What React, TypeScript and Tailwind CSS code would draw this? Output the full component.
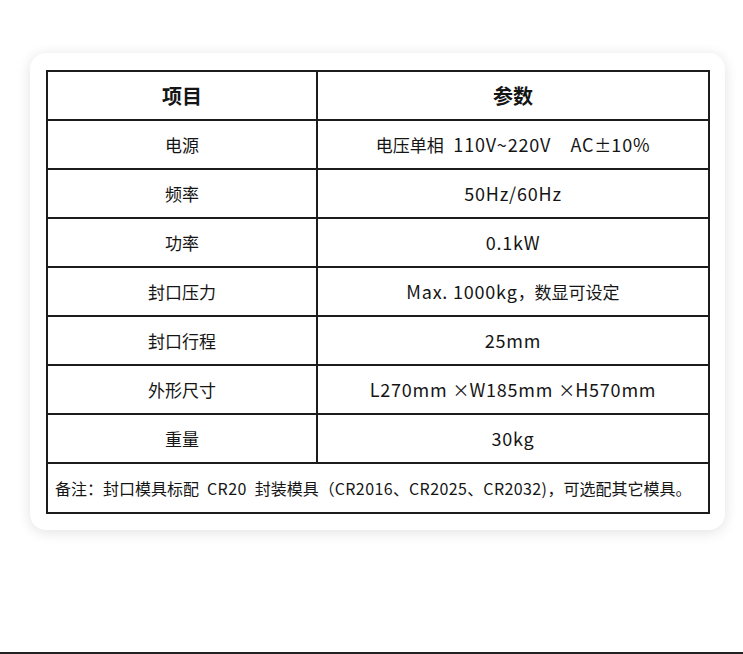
import React from "react";

const rows: [string, string][] = [
  ["电源", "电压单相  110V~220V    AC±10%"],
  ["频率", "50Hz/60Hz"],
  ["功率", "0.1kW"],
  ["封口压力", "Max. 1000kg，数显可设定"],
  ["封口行程", "25mm"],
  ["外形尺寸", "L270mm ×W185mm ×H570mm"],
  ["重量", "30kg"],
];

function Wide({ text, cls }: { text: string; cls: string }) {
  const parts = text.match(/[\x20-\x7e]+|[^\x20-\x7e]+/g) || [];
  return (
    <>
      {parts.map((p, i) =>
        /^[\x20-\x7e]+$/.test(p) ? (
          <span key={i} className={cls}>
            {p}
          </span>
        ) : (
          <span key={i}>{p}</span>
        )
      )}
    </>
  );
}

export default function App() {
  return (
    <div
      className="w-[743px] h-[654px] bg-white flex flex-col text-[#151515]"
      style={{ fontFamily: '"Noto Sans CJK SC", "Noto Sans", sans-serif' }}
    >
      <div className="flex-1 pt-[53px] pl-[30px]">
        <div className="w-[695px] bg-white rounded-[16px] shadow-[0_2px_14px_rgba(0,0,0,0.12)] pt-[17px] pb-[16px] pl-[16px] pr-[15px]">
          <table className="w-[664px] border-collapse border-2 border-[#1c1c1c]">
            <tbody>
              <tr className="h-[49px]">
                <td className="w-[270px] border-2 border-[#1c1c1c] text-center text-[20px] font-bold">项目</td>
                <td className="border-2 border-[#1c1c1c] text-center text-[20px] font-bold">参数</td>
              </tr>
              {rows.map(([k, v]) => (
                <tr key={k} className="h-[49px]">
                  <td className="border-2 border-[#1c1c1c] text-center text-[17px]">{k}</td>
                  <td className="border-2 border-[#1c1c1c] text-center text-[17px] whitespace-pre">
                    <Wide text={v} cls="text-[18px] tracking-[0.8px]" />
                  </td>
                </tr>
              ))}
              <tr className="h-[50px]">
                <td colSpan={2} className="border-2 border-[#1c1c1c] pl-[7px] text-[16px] whitespace-pre">
                  <Wide text="备注：封口模具标配  CR20  封装模具（CR2016、CR2025、CR2032)，可选配其它模具。" cls="tracking-[0.4px]" />
                </td>
              </tr>
            </tbody>
          </table>
        </div>
      </div>
      <div className="h-[2px] bg-[#222]" />
    </div>
  );
}
